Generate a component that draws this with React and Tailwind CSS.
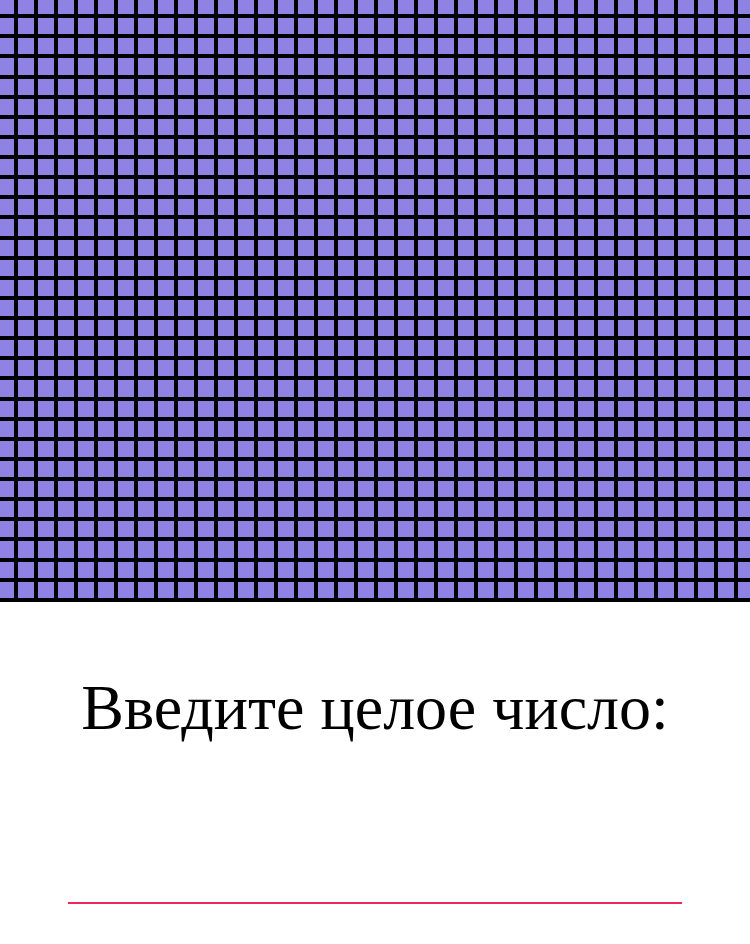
import React from 'react';

const COLS = 38;
const ROWS = 31;

export default function App() {
  const cells = Array.from({ length: COLS * ROWS });

  return (
    <div className="w-[750px] min-h-[944px] bg-white font-['Liberation_Serif',serif]">
      {/* pattern header */}
      <div className="h-[602px] overflow-hidden">
        <div className="-mt-1 -ml-1 grid grid-cols-[repeat(38,20px)] grid-rows-[repeat(31,20.13px)] w-[760px]">
          {cells.map((_, i) => (
            <div key={i} className="border-2 border-black bg-[#8e82e3]" />
          ))}
        </div>
      </div>

      <div className="flex flex-col items-center">
        <h1 className="mt-[71px] text-[64px] leading-[70.8px] text-black font-normal">
          Введите целое число:
        </h1>
        <input
          type="text"
          className="mt-[101px] w-[614px] h-[59px] border-b-2 border-[#f0245c] bg-transparent outline-none text-[40px] text-center"
        />
      </div>
    </div>
  );
}
